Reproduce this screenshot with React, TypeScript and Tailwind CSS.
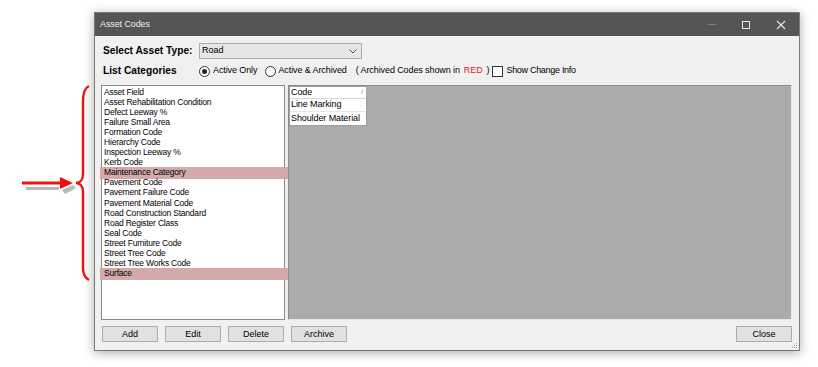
import React from 'react';

const categories = [
  'Asset Field',
  'Asset Rehabilitation Condition',
  'Defect Leeway %',
  'Failure Small Area',
  'Formation Code',
  'Hierarchy Code',
  'Inspection Leeway %',
  'Kerb Code',
  'Maintenance Category',
  'Pavement Code',
  'Pavement Failure Code',
  'Pavement Material Code',
  'Road Construction Standard',
  'Road Register Class',
  'Seal Code',
  'Street Furniture Code',
  'Street Tree Code',
  'Street Tree Works Code',
  'Surface',
];

const highlighted = ['Maintenance Category', 'Surface'];

const codes = ['Line Marking', 'Shoulder Material'];

function Radio({ checked }: { checked?: boolean }) {
  return (
    <span className="w-[11px] h-[11px] rounded-full border border-[#333] bg-white flex items-center justify-center">
      {checked && <span className="w-[5px] h-[5px] rounded-full bg-[#222]" />}
    </span>
  );
}

function WinButton({ label, className = '' }: { label: string; className?: string }) {
  return (
    <button className={`w-[56px] h-[16px] bg-[#e1e1e1] border border-[#adadad] text-[9px] leading-none text-black ${className}`}>
      {label}
    </button>
  );
}

function Annotation() {
  return (
    <svg className="absolute left-0 top-0" width="100" height="300" viewBox="0 0 100 300">
      <path
        d="M89 86 C84 88 83 94 83 102 L83 174 C83 180 80 183 76 183 C80 183 83 186 83 192 L83 268 C83 275 85 278 89 280"
        fill="none"
        stroke="#ee1111"
        strokeWidth="2.4"
      />
      <line x1="26" y1="188.5" x2="59" y2="188.5" stroke="#b9b9b9" strokeWidth="3" />
      <polygon points="62,190 73,185 76,188 65,194" fill="#b9b9b9" />
      <line x1="22" y1="183" x2="62" y2="183" stroke="#ee1111" strokeWidth="3" />
      <polygon points="60,177 73,183 60,189" fill="#ee1111" />
    </svg>
  );
}

export default function App() {
  return (
    <div
      className="relative w-[818px] h-[367px] bg-white overflow-hidden"
      style={{ fontFamily: '"Liberation Sans", Arial, sans-serif' }}
    >
      <Annotation />
      <div className="ml-[94px] mt-[12px] w-[706px] h-[339px] border border-[#7a7a7a] bg-[#f0f0f0] shadow-[0_2px_10px_rgba(0,0,0,0.32)] flex flex-col">
        {/* title bar */}
        <div className="h-[23px] shrink-0 bg-[#555555] flex items-center pl-[5px] text-[9px] text-[#ececec] tracking-[-0.1px]">
          <span>Asset Codes</span>
          <div className="ml-auto flex items-center h-full">
            <div className="w-[34px] h-full flex items-center justify-center">
              <span className="w-[8px] h-px bg-[#7c7c7c]" />
            </div>
            <div className="w-[34px] h-full flex items-center justify-center">
              <span className="w-[8px] h-[8px] border border-[#e8e8e8]" />
            </div>
            <div className="w-[36px] h-full flex items-center justify-center">
              <svg width="10" height="10" viewBox="0 0 10 10">
                <path d="M1 1 L9 9 M9 1 L1 9" stroke="#e8e8e8" strokeWidth="1.1" />
              </svg>
            </div>
          </div>
        </div>

        {/* body */}
        <div className="flex-1 flex flex-col pl-[6px] pr-[7px] pt-[7px] pb-[8px]">
          <div className="flex items-center h-[16px] shrink-0">
            <span className="w-[98px] pl-[2px] text-[10.2px] font-bold text-black">Select Asset Type:</span>
            <div className="w-[163px] h-[16px] bg-[#e6e6e6] border border-[#acacac] flex items-center pl-[2px] pr-[4px] text-[9px] text-black">
              <span>Road</span>
              <svg className="ml-auto" width="8" height="5" viewBox="0 0 8 5">
                <path d="M0.5 0.5 L4 4 L7.5 0.5" fill="none" stroke="#555" strokeWidth="1" />
              </svg>
            </div>
          </div>

          <div className="flex items-center h-[12px] shrink-0 mt-[6px] text-[9px] text-black tracking-[-0.1px]">
            <span className="w-[98px] pl-[2px] text-[10.2px] font-bold tracking-normal">List Categories</span>
            <Radio checked />
            <span className="ml-[3px]">Active Only</span>
            <span className="ml-[8px]">
              <Radio />
            </span>
            <span className="ml-[2px]">Active &amp; Archived</span>
            <span className="ml-[9px]">( Archived Codes shown in</span>
            <span className="ml-[4px] text-[#ee1c25]">RED</span>
            <span className="ml-[4px]">)</span>
            <span className="ml-[3px] w-[11px] h-[11px] border border-[#333] bg-white" />
            <span className="ml-[3px] tracking-[-0.3px]">Show Change Info</span>
          </div>

          <div className="flex gap-[3px] mt-[8px] h-[235px] shrink-0">
            <div className="w-[184px] h-full bg-white border border-[#8a8a8a] pt-px text-[8.5px] tracking-[-0.2px] text-black">
              {categories.map((c) => (
                <div key={c} className="relative h-[10.05px] leading-[10px] pl-[2px]">
                  {highlighted.includes(c) && (
                    <span className="absolute left-[-2px] right-[-4px] top-0 bottom-[-2px] bg-[#d5a9aa]" />
                  )}
                  <span className="relative">{c}</span>
                </div>
              ))}
            </div>
            <div className="flex-1 h-full bg-[#ababab] border border-t-[#8c8c8c] border-l-[#8c8c8c] border-r-[#e8e8e8] border-b-[#e8e8e8]">
              <div className="w-[78px] bg-white border border-[#a0a0a0] text-[9px] text-black tracking-[-0.1px]">
                <div className="h-[12px] flex items-center pl-[1px] pr-[3px] border-b border-[#d8d8d8]">
                  <span>Code</span>
                  <span className="ml-auto text-[7px] text-[#888]">/</span>
                </div>
                {codes.map((c) => (
                  <div key={c} className="h-[13px] flex items-center pl-[1px] border-b border-[#e6e6e6] last:border-b-0">
                    {c}
                  </div>
                ))}
              </div>
            </div>
          </div>

          <div className="flex items-center gap-[7px] mt-[6px] pl-[1px] shrink-0">
            <WinButton label="Add" />
            <WinButton label="Edit" />
            <WinButton label="Delete" />
            <WinButton label="Archive" />
            <WinButton label="Close" className="ml-auto" />
          </div>
        </div>
      </div>
      <svg className="absolute left-[792px] top-[343px]" width="6" height="6" viewBox="0 0 6 6">
        <rect x="4" y="0" width="1" height="1" fill="#9a9a9a" />
        <rect x="2" y="2" width="1" height="1" fill="#9a9a9a" />
        <rect x="4" y="2" width="1" height="1" fill="#9a9a9a" />
        <rect x="0" y="4" width="1" height="1" fill="#9a9a9a" />
        <rect x="2" y="4" width="1" height="1" fill="#9a9a9a" />
        <rect x="4" y="4" width="1" height="1" fill="#9a9a9a" />
      </svg>
    </div>
  );
}
